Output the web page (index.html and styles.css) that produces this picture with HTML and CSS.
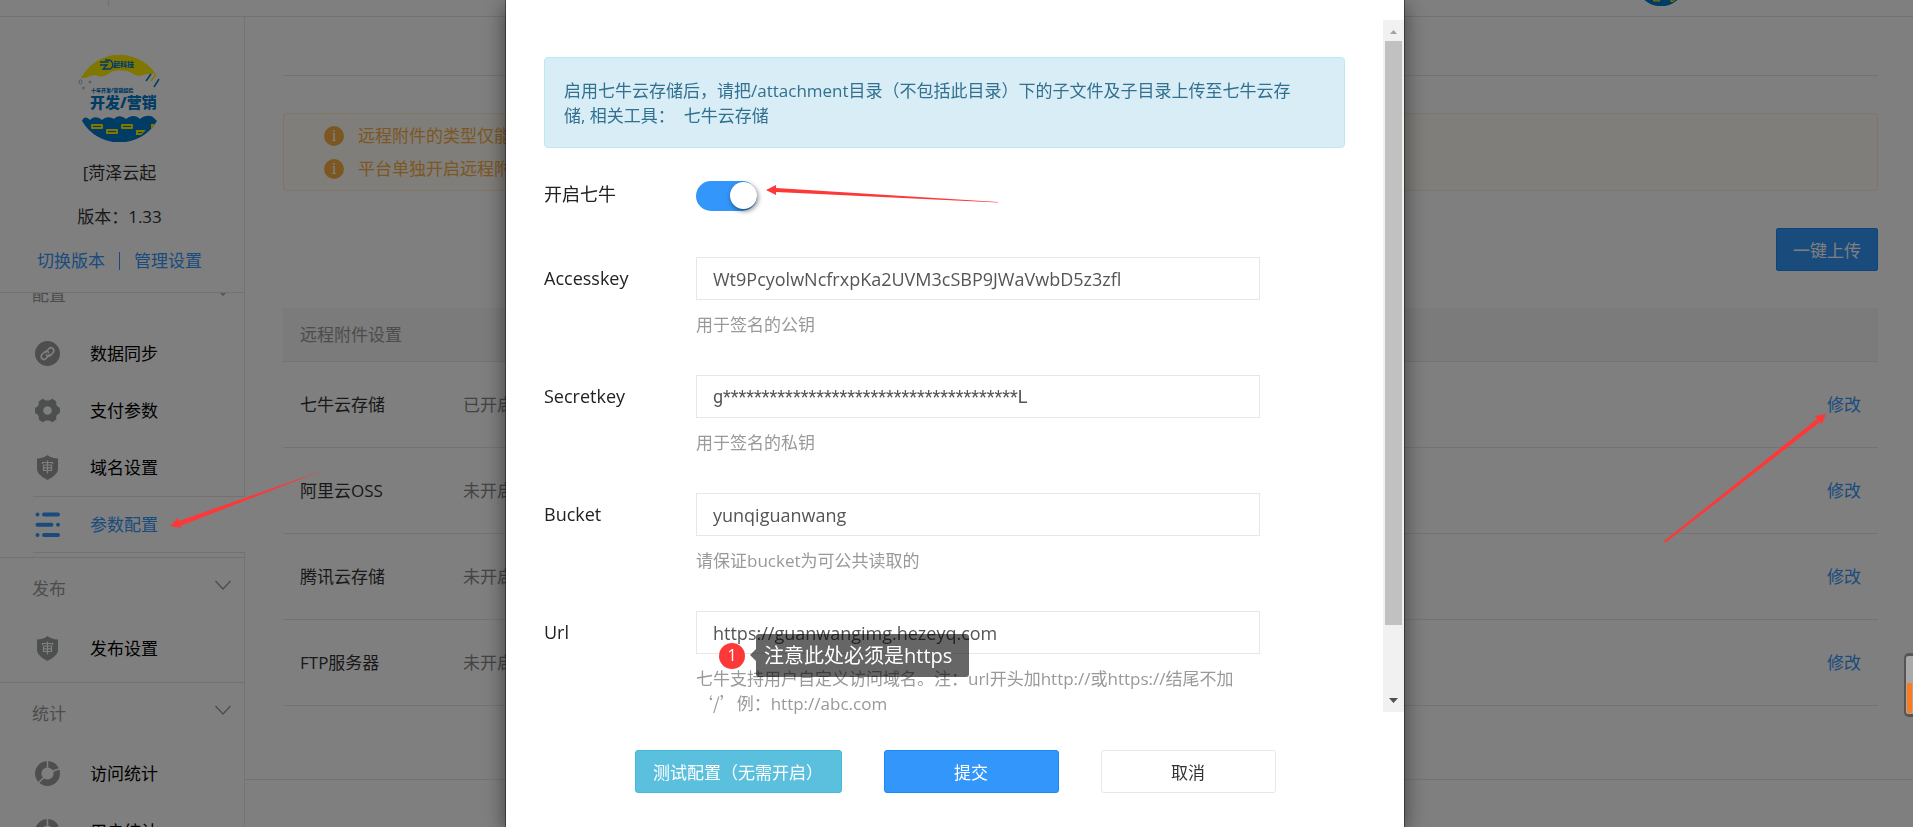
FILE: index.html
```html
<!DOCTYPE html>
<html lang="zh-CN">
<head>
    <meta charset="utf-8">
    <title>参数配置</title>
    <link rel="stylesheet" href="styles.css">
</head>
<body>
    <svg class="sprite" aria-hidden="true">
        <symbol id="logo" viewBox="0 0 87 87">
            <path fill="#ffee00" d="M5 23A43.500 43.500 0 0 1 79 18C76 19 74 20 70 19C62 22 60 21 54 17C48 15 38 14 34 18C29 21 26 23 20 20C14 20 10 24 5 23Z"/>
            <path fill="#0078c8" d="M6 66C8 61 11 62 14 65C18 61 22 62 26 65C30 61 35 62 38 64C42 60 46 61 50 64C55 60 60 60 64 64C69 60 75 60 78 63L81 66A43.500 43.500 0 0 1 6 66Z"/>
            <g fill="#ffee00">
                <rect x="15" y="69" width="12" height="5" rx="1"/>
                <rect x="30" y="74" width="12" height="5" rx="1"/>
                <rect x="45" y="69" width="12" height="5" rx="1"/>
                <path d="M60 75H70L65 80H60ZM75 69H79L75 74Z"/>
            </g>
            <path stroke="#0078c8" stroke-width="1" d="M17 71.500h8M32 76.500h8M47 71.500h8M62 77.500h4"/>
            <path fill="none" stroke="#0078c8" stroke-width="1.300" d="M24 7H33M24 10H31L27 14H33C38 14 38 5 32 5H29"/>
            <text class="logo-small" x="37" y="12">起科技</text>
            <text class="logo-tiny" x="15" y="37">十年开发/营销经验</text>
            <text class="logo-big" x="14" y="53">开发/营销</text>
            <path stroke="#0078c8" stroke-width="1.500" d="M70 26L75 19M78 32L83 24"/>
            <path stroke="#ffee00" stroke-width="1.500" d="M75 26L80 19"/>
            <g fill="none" stroke="#7aa5c0" stroke-width=".8">
                <ellipse cx="4.500" cy="27" rx="1.500" ry="2.200"/><circle cx="14" cy="27" r="1"/><circle cx="7.500" cy="33" r="1"/>
            </g>
        </symbol>
        <symbol id="link" viewBox="0 0 25 25">
            <circle cx="12.500" cy="12.500" r="12.500" fill="#9b9e9d"/>
            <g fill="none" stroke="#fff" stroke-width="1.600" stroke-linecap="round">
                <path d="M10.500 11.500L14 7.500C16 5.500 20 8 18.500 11L15.500 14.500C14.500 15.500 12.500 15.500 11.500 14"/>
                <path d="M14.500 13.500L11 17.500C9 20 5 17.500 6.500 14L9.500 11C10.500 10 12.500 10 13.500 11.300"/>
            </g>
        </symbol>
        <symbol id="gear" viewBox="0 0 25 25">
            <path fill="#9b9e9d" fill-rule="evenodd" d="M5 2.500L8 .5C9 2 10.500 2.500 12.500 2.500S16 2 17 .5L20 2.500L21.500 4C20.500 6.500 22 9 24.500 9.500C25.200 11.500 25.200 13.500 24.500 15.500C22 16 20.500 18.500 21.500 21L20 22.500L17 24.500C16 23 14.500 22.500 12.500 22.500S9 23 8 24.500L5 22.500L3.500 21C4.500 18.500 3 16 .5 15.500C-.2 13.500-.2 11.500.5 9.500C3 9 4.500 6.500 3.500 4ZM12.500 8.200A4.300 4.300 0 1 0 12.500 16.800A4.300 4.300 0 1 0 12.500 8.200Z"/>
        </symbol>
        <symbol id="shield" viewBox="0 0 25 25">
            <path fill="#9b9e9d" d="M12.500 0C15 2.200 19 3.300 23 3.500V14C23 18.500 18 22 12.500 25C7 22 2 18.500 2 14V3.500C6 3.300 10 2.200 12.500 0Z"/>
            <path fill="none" stroke="#fff" stroke-width="1.200" d="M7.500 9V7.500H17.500V9M12.500 5.500V18.500M8.500 10H16.500V15.500H8.500ZM8.500 12.800H16.500"/>
        </symbol>
        <symbol id="list" viewBox="0 0 25 25">
            <g stroke="#3396fa" stroke-width="4" stroke-linecap="round">
                <path d="M2.500 2.500h.01M9 2.500H23M2.500 12.800H16.500M23 12.800h.01M2.500 23h.01M9 23H23"/>
            </g>
        </symbol>
        <symbol id="chart" viewBox="0 0 25 25">
            <circle cx="12.500" cy="12.500" r="9.300" fill="none" stroke="#9b9e9d" stroke-width="6.400"/>
            <path stroke="#fff" stroke-width="1.500" d="M12.500 0V8M17 10.500L25 7.500M9.500 16L3 22"/>
        </symbol>
        <symbol id="chevron" viewBox="0 0 16 10">
            <path fill="none" stroke="#999" stroke-width="1.300" d="M.5 1L8 9L15.500 1"/>
        </symbol>
    </svg>

    <div class="page">
        <header class="topbar">
            <span class="topbar-divider"></span>
            <svg class="topbar-avatar"><use href="#logo"/></svg>
        </header>
        <div class="layout">
            <aside class="sidebar">
                <div class="profile">
                    <svg class="profile-logo"><use href="#logo"/></svg>
                    <div class="profile-line">[菏泽云起</div>
                    <div class="profile-line">版本：1.33</div>
                    <div class="profile-links">
                        <a href="#">切换版本</a><span class="bar"></span><a href="#">管理设置</a>
                    </div>
                </div>
                <nav class="menu">
                    <section class="menu-group menu-group-first">
                        <div class="menu-head">配置<svg class="chevron"><use href="#chevron"/></svg></div>
                        <a class="menu-item" href="#"><svg class="icon"><use href="#link"/></svg>数据同步</a>
                        <a class="menu-item" href="#"><svg class="icon"><use href="#gear"/></svg>支付参数</a>
                        <a class="menu-item" href="#"><svg class="icon"><use href="#shield"/></svg>域名设置</a>
                        <a class="menu-item active" href="#"><svg class="icon"><use href="#list"/></svg>参数配置</a>
                    </section>
                    <section class="menu-group">
                        <div class="menu-head">发布<svg class="chevron"><use href="#chevron"/></svg></div>
                        <a class="menu-item" href="#"><svg class="icon"><use href="#shield"/></svg>发布设置</a>
                    </section>
                    <section class="menu-group">
                        <div class="menu-head">统计<svg class="chevron"><use href="#chevron"/></svg></div>
                        <a class="menu-item" href="#"><svg class="icon"><use href="#chart"/></svg>访问统计</a>
                        <a class="menu-item" href="#"><svg class="icon"><use href="#chart"/></svg>用户统计</a>
                    </section>
                </nav>
            </aside>
            <main class="main">
                <div class="content">
                    <div class="tabs"></div>
                    <div class="notice">
                        <p><span class="info">i</span>远程附件的类型仅能</p>
                        <p><span class="info">i</span>平台单独开启远程附</p>
                    </div>
                    <div class="toolbar"><button class="btn-upload" type="button">一键上传</button></div>
                    <table class="list">
                        <thead>
                            <tr><th colspan="3">远程附件设置</th></tr>
                        </thead>
                        <tbody>
                            <tr><td class="name">七牛云存储</td><td class="state">已开启</td><td class="action"><a href="#">修改</a></td></tr>
                            <tr><td class="name">阿里云OSS</td><td class="state">未开启</td><td class="action"><a href="#">修改</a></td></tr>
                            <tr><td class="name">腾讯云存储</td><td class="state">未开启</td><td class="action"><a href="#">修改</a></td></tr>
                            <tr><td class="name">FTP服务器</td><td class="state">未开启</td><td class="action"><a href="#">修改</a></td></tr>
                        </tbody>
                    </table>
                </div>
                <footer class="footer"></footer>
            </main>
        </div>
    </div>

    <div class="mask">
        <div class="modal" role="dialog">
            <div class="modal-scroll">
                <form class="modal-body" id="qiniu">
                    <div class="alert">启用七牛云存储后，请把/attachment目录（不包括此目录）下的子文件及子目录上传至七牛云存<br>储, 相关工具：&nbsp; 七牛云存储</div>
                    <div class="form-row switch-row">
                        <label class="label" for="enable">开启七牛</label>
                        <input class="switch" type="checkbox" id="enable" checked>
                    </div>
                    <div class="form-row">
                        <label class="label" for="accesskey">Accesskey</label>
                        <div class="field">
                            <input class="text" type="text" id="accesskey" value="Wt9PcyolwNcfrxpKa2UVM3cSBP9JWaVwbD5z3zfl">
                            <p class="hint">用于签名的公钥</p>
                        </div>
                    </div>
                    <div class="form-row">
                        <label class="label" for="secretkey">Secretkey</label>
                        <div class="field">
                            <input class="text text-secret" type="text" id="secretkey" value="g**************************************L">
                            <p class="hint">用于签名的私钥</p>
                        </div>
                    </div>
                    <div class="form-row">
                        <label class="label" for="bucket">Bucket</label>
                        <div class="field">
                            <input class="text" type="text" id="bucket" value="yunqiguanwang">
                            <p class="hint">请保证bucket为可公共读取的</p>
                        </div>
                    </div>
                    <div class="form-row">
                        <label class="label" for="url">Url</label>
                        <div class="field">
                            <input class="text" type="text" id="url" value="https://guanwangimg.hezeyq.com">
                            <p class="hint">七牛支持用户自定义访问域名。注：url开头加http://或https://结尾不加<br><span class="cjk">‘/’</span>例：http://abc.com</p>
                            <div class="note"><span class="note-num">1</span><span class="note-text">注意此处必须是https</span></div>
                        </div>
                    </div>
                </form>
                <div class="scrollbar">
                    <svg class="scroll-arrow" viewBox="0 0 21 21"><path fill="#a3a3a3" d="M7 14H14L10.500 10Z"/></svg>
                    <div class="scroll-thumb"></div>
                    <svg class="scroll-arrow" viewBox="0 0 21 21"><path fill="#505050" d="M6 7H15L10.500 12Z"/></svg>
                </div>
            </div>
            <div class="modal-footer">
                <button class="btn btn-test" type="button">测试配置（无需开启）</button>
                <button class="btn btn-submit" type="submit" form="qiniu">提交</button>
                <button class="btn btn-cancel" type="button">取消</button>
            </div>
        </div>
    </div>

    <svg class="arrow arrow-menu" viewBox="0 0 160 62"><path d="M0 56L8 48L9 51L157 -1L10 56L11 58Z"/></svg>
    <svg class="arrow arrow-switch" viewBox="0 0 234 16"><path d="M0 6L10 1V4L232 18L232 18.500L10 8V11Z"/></svg>
    <svg class="arrow arrow-edit" viewBox="0 0 164 130"><path d="M163 1L152 3L154 6L1 128L2 130L157 9L159 11Z"/></svg>
    <div class="float-meter"><div class="float-meter-bar"></div></div>
</body>
</html>
```
FILE: styles.css
```css
*{
    box-sizing: border-box;
}
body{
    margin: 0;
    background-color: #fff;
    color: #333;
    font-family: "Open Sans", "Noto Sans CJK SC", sans-serif;
    font-size: 17px;
    line-height: 25px;
}
a{
    color: #3396fa;
    text-decoration: none;
}
p{
    margin: 0;
}
button, input{
    font-family: inherit;
}
.sprite{
    display: none;
}
.logo-small, .logo-tiny, .logo-big{
    fill: #0078c8;
    font-weight: 900;
}
.logo-small{
    font-size: 7px;
}
.logo-tiny{
    font-size: 5px;
}
.logo-big{
    font-size: 15px;
}

/* page behind the dialog */
.page{
    height: 100vh;
    overflow: hidden;
    display: flex;
    flex-direction: column;
}
.topbar{
    height: 17px;
    flex: none;
    overflow: hidden;
    display: flex;
    justify-content: space-between;
    align-items: flex-end;
    padding: 0 227px 10px 108px;
    border-bottom: 1px solid #e4e5e6;
}
.topbar-divider{
    width: 1px;
    height: 50px;
    background-color: #e4e5e6;
}
.topbar-avatar{
    width: 50px;
    height: 50px;
}
.layout{
    flex: 1;
    min-height: 0;
    display: flex;
}
.sidebar{
    width: 245px;
    flex: none;
    display: flex;
    flex-direction: column;
    border-right: 1px solid #e8e8e8;
}
.profile{
    flex: none;
    height: 276px;
    padding: 38px 5px 0 0;
    display: flex;
    flex-direction: column;
    align-items: center;
    border-bottom: 1px solid #e4e5e6;
}
.profile-logo{
    width: 87px;
    height: 87px;
    margin-bottom: 9px;
}
.profile-line{
    line-height: 44px;
}
.profile-links{
    display: flex;
    align-items: center;
    gap: 14px;
    line-height: 44px;
}
.bar{
    width: 1px;
    height: 18px;
    background-color: #3396fa;
}
.menu{
    flex: 1;
    min-height: 0;
    overflow: hidden;
    margin-right: -1px;
}
.menu-group{
    border-top: 1px solid #e4e5e6;
    padding-bottom: 5px;
}
.menu-group-first{
    margin-top: -30px;
    padding-bottom: 4px;
}
.menu-head{
    height: 61px;
    padding: 0 14px 0 32px;
    display: flex;
    align-items: center;
    justify-content: space-between;
    color: #999;
}
.chevron{
    width: 16px;
    height: 10px;
    margin-bottom: 8px;
}
.menu-item{
    height: 58px;
    margin-left: 33px;
    padding-left: 2px;
    display: flex;
    align-items: center;
    gap: 30px;
    color: #000;
}
.menu-group-first .menu-item{
    height: 57px;
}
.menu-item.active{
    color: #3396fa;
    background-color: #fff;
    border-top: 1px solid #e4e5e6;
    border-bottom: 1px solid #e4e5e6;
}
.icon{
    width: 25px;
    height: 25px;
}
.main{
    flex: 1;
    display: flex;
    flex-direction: column;
}
.content{
    flex: 1;
    padding: 0 35px 0 38px;
}
.tabs{
    height: 59px;
    margin-bottom: 37px;
    border-bottom: 1px solid #e4e5e6;
}
.notice{
    padding: 5px 40px;
    color: #f9ae45;
    background-color: #fffdf5;
    border: 1px solid #faebcc;
    border-radius: 4px;
}
.notice p{
    display: flex;
    align-items: center;
    gap: 14px;
    line-height: 33px;
}
.info{
    width: 20px;
    height: 20px;
    border-radius: 50%;
    background-color: #f9ae45;
    color: #fff;
    font-family: "Liberation Serif", serif;
    font-size: 17px;
    line-height: 20px;
    text-align: center;
}
.toolbar{
    display: flex;
    justify-content: flex-end;
    padding: 37px 0;
}
.btn-upload{
    height: 43px;
    padding: 0 16px;
    font-size: 17px;
    color: #fff;
    background-color: #3396fa;
    border: 1px solid #198afa;
    border-radius: 2px;
}
.list{
    width: 100%;
    border-collapse: separate;
    border-spacing: 0;
}
.list th{
    height: 54px;
    padding: 0 17px;
    font-weight: normal;
    text-align: left;
    color: #999;
    background-color: #f6f6f6;
    border-bottom: 1px solid #e7e7e7;
}
.list td{
    height: 86px;
    padding: 0 17px;
    border-bottom: 1px solid #e7e7e7;
}
.list .name{
    width: 163px;
    white-space: nowrap;
}
.list .state{
    color: #888;
}
.list .action{
    text-align: right;
}
.footer{
    height: 48px;
    border-top: 1px solid #e7e7e7;
}

/* dialog */
.mask{
    position: fixed;
    inset: 0;
    display: flex;
    justify-content: center;
    padding-right: 3px;
    background-color: rgba(0, 0, 0, 0.5);
}
.modal{
    width: 900px;
    height: 100%;
    display: flex;
    flex-direction: column;
    padding-top: 20px;
    background-color: #fff;
    background-clip: padding-box;
    border: solid rgba(0, 0, 0, 0.4);
    border-width: 0 1px;
    box-shadow: 0 5px 20px rgba(0, 0, 0, 0.5);
}
.modal-scroll{
    flex: 1;
    min-height: 0;
    display: flex;
}
.modal-body{
    flex: 1;
    padding: 37px 38px 0;
}
.alert{
    padding: 20px 19px 19px;
    margin-bottom: 25px;
    white-space: nowrap;
    color: #31708f;
    background-color: #d9edf7;
    border: 1px solid #bce8f1;
    border-radius: 4px;
}
.form-row{
    display: flex;
    margin-bottom: 38px;
}
.switch-row{
    align-items: center;
    margin-bottom: 41px;
}
.label{
    width: 152px;
    flex: none;
    font-size: 18px;
    line-height: 43px;
    color: #222;
}
.field{
    position: relative;
    width: 564px;
}
.text{
    display: block;
    width: 100%;
    height: 43px;
    padding: 0 16px;
    font-size: 18px;
    color: #555;
    border: 1px solid #e7e7e7;
    background-color: #fff;
    outline: none;
}
.text-secret{
    font-family: Roboto, sans-serif;
}
.hint{
    margin-top: 12px;
    color: #999;
    white-space: nowrap;
}
.cjk{
    font-family: "Noto Sans CJK SC", sans-serif;
    line-height: 1;
}
.switch{
    appearance: none;
    display: flex;
    align-items: center;
    justify-content: flex-end;
    width: 61px;
    height: 30px;
    margin: 2px 0 0;
    border-radius: 15px;
    background-color: #3396fa;
}
.switch::before{
    content: "";
    width: 27px;
    height: 27px;
    border-radius: 50%;
    background-color: #fff;
    box-shadow: 1px 2px 5px rgba(0, 0, 0, 0.5);
}
.note{
    position: absolute;
    left: 23px;
    top: 23px;
    display: flex;
    align-items: center;
    gap: 11px;
}
.note-num{
    width: 26px;
    height: 26px;
    border-radius: 50%;
    background-color: #fd3838;
    color: #fff;
    font-size: 16px;
    line-height: 25px;
    text-align: center;
}
.note-text{
    position: relative;
    padding: 0 17px 0 8px;
    border-radius: 3px;
    background-color: rgba(0, 0, 0, 0.6);
    color: #fff;
    font-size: 20px;
    line-height: 43px;
    white-space: nowrap;
}
.note-text::before{
    content: "";
    position: absolute;
    left: -6px;
    top: 15px;
    border: solid transparent;
    border-width: 6px 6px 6px 0;
    border-right-color: rgba(0, 0, 0, 0.6);
}
.scrollbar{
    width: 21px;
    flex: none;
    display: flex;
    flex-direction: column;
    background-color: #f1f1f1;
}
.scroll-arrow{
    width: 21px;
    height: 21px;
    flex: none;
}
.scroll-thumb{
    flex: 1;
    margin: 0 2px 66px;
    background-color: #c1c1c1;
}
.modal-footer{
    flex: none;
    display: flex;
    justify-content: center;
    gap: 42px;
    padding: 38px 0 34px;
}
.btn{
    width: 175px;
    height: 43px;
    font-size: 17px;
    color: #fff;
    border: 1px solid;
    border-radius: 3px;
}
.btn-test{
    width: 207px;
    padding: 0;
    background-color: #5bc0de;
    border-color: #46b8da;
}
.btn-submit{
    background-color: #3396fa;
    border-color: #198afa;
}
.btn-cancel{
    color: #333;
    background-color: #fff;
    border-color: #e7e7e7;
}

/* marks lying over the screen */
.arrow{
    position: fixed;
    fill: #fd3838;
    overflow: visible;
}
.arrow-menu{
    left: 170px;
    top: 470px;
    width: 160px;
    height: 62px;
}
.arrow-switch{
    left: 766px;
    top: 184px;
    width: 234px;
    height: 16px;
}
.arrow-edit{
    left: 1663px;
    top: 413px;
    width: 164px;
    height: 130px;
}
.float-meter{
    position: fixed;
    right: 0;
    top: 653px;
    width: 9px;
    height: 64px;
    padding: 27px 1px 1px;
    border: 3px solid #555;
    border-width: 3px 0 3px 2px;
    border-radius: 5px 0 0 5px;
    background-color: #a9a9a9;
}
.float-meter-bar{
    height: 100%;
    background-color: #ff7a1c;
    border-radius: 1px;
}
```
